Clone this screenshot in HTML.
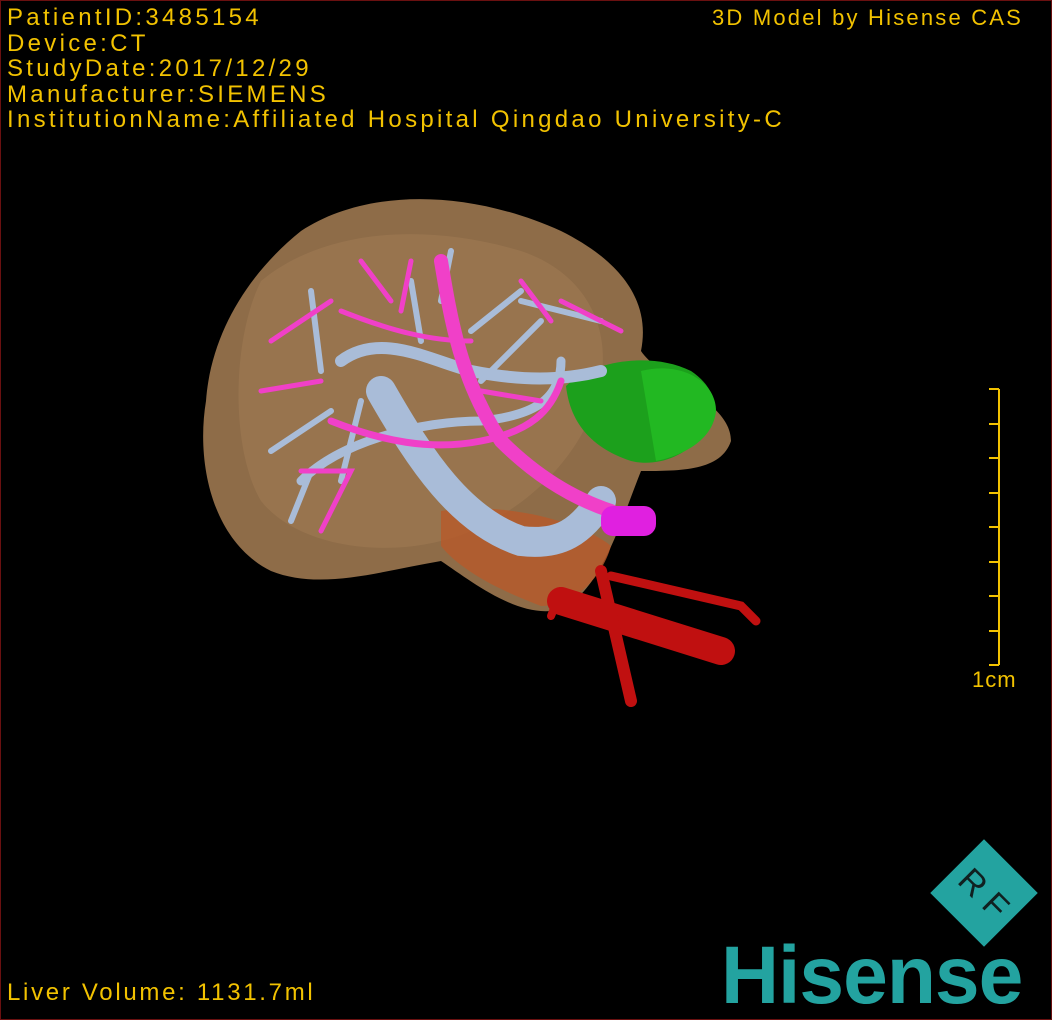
<!DOCTYPE html>
<html><head><style>
html,body{margin:0;padding:0;background:#000;}
.w{position:relative;width:1050px;height:1018px;border:1px solid #6a1010;overflow:hidden;background:#000;}
.t{position:absolute;color:#f2c200;font-family:"Liberation Sans",sans-serif;font-size:24px;letter-spacing:3.3px;white-space:nowrap;line-height:25.5px;}
</style></head><body><div class="w">
<svg width="1050" height="1018" style="position:absolute;left:0;top:0">
<path d="M300 230 C360 190 460 185 560 230 C620 260 650 300 640 350 C660 380 730 400 730 440 C720 470 680 470 640 470 C620 520 600 590 560 608 C520 620 470 580 440 560 C380 570 320 590 270 570 C210 540 195 460 205 400 C210 330 250 270 300 230 Z" fill="#8e6c48"/>
<path d="M260 280 C320 230 420 220 520 250 C580 270 610 320 600 380 C590 440 540 500 470 530 C400 560 300 550 260 500 C230 450 230 340 260 280Z" fill="#9e7a54" opacity="0.6"/>
<path d="M440 510 C500 500 580 520 610 545 C600 580 570 605 540 605 C500 590 460 570 440 545Z" fill="#b85a2a" opacity="0.8"/>
<g stroke="#c01010" fill="none" stroke-linecap="round">
<path d="M560 600 L720 650" stroke-width="28"/>
<path d="M600 570 L630 700" stroke-width="12"/>
<path d="M610 575 L740 605 L755 620" stroke-width="9"/>
<path d="M560 590 L550 615" stroke-width="8"/>
</g>
<path d="M565 385 C590 360 650 350 690 370 C720 390 720 420 700 435 C680 460 650 465 630 460 C600 450 570 430 565 385Z" fill="#1ca01c"/>
<path d="M640 370 C680 360 715 380 715 410 C712 440 680 455 655 460Z" fill="#22b822"/>
<g stroke="#a9bcd8" fill="none" stroke-linecap="round">
<path d="M380 390 C420 460 460 520 520 540 C560 545 580 530 600 500" stroke-width="30"/>
<path d="M300 480 C340 440 420 420 480 420 C530 415 560 400 560 360" stroke-width="9"/>
<path d="M340 360 C380 330 430 360 470 370 C520 380 560 380 600 370" stroke-width="12"/>
<path d="M310 290 L320 370 M270 450 L330 410 M290 520 L310 470 M360 400 L340 480 M440 300 L450 250 M470 330 L520 290 M480 380 L540 320 M520 300 L600 320 M420 340 L410 280" stroke-width="6"/>
</g>
<g stroke="#f040c8" fill="none" stroke-linecap="round">
<path d="M440 260 C450 320 460 380 500 440 C540 480 580 500 610 510" stroke-width="14"/>
<path d="M330 420 C380 440 430 450 480 440 C530 430 550 410 560 380" stroke-width="7"/>
<path d="M340 310 C390 330 430 340 470 340 M270 340 L330 300 M300 470 L350 470 L320 530 M260 390 L320 380 M520 280 L550 320 M480 390 L540 400 M410 260 L400 310 M560 300 L620 330 M360 260 L390 300" stroke-width="5"/>
</g>
<rect x="600" y="505" width="55" height="30" rx="12" fill="#e020e0"/>
<g stroke="#f2c200" stroke-width="2" fill="none">
<path d="M998 388 L998 664"/>
<path d="M988 388 H998 M988 423 H998 M988 457 H998 M988 492 H998 M988 526 H998 M988 561 H998 M988 595 H998 M988 630 H998 M988 664 H998"/>
</g>
<g transform="translate(983,892) rotate(45)">
<rect x="-38" y="-38" width="76" height="76" fill="#23a3a0"/>
<text x="0" y="12" text-anchor="middle" font-family="Liberation Sans,sans-serif" font-size="34" fill="#102020">R F</text>
</g>
</svg>
<div class="t" style="left:6px;top:4px">PatientID:3485154<br>Device:CT<br>StudyDate:2017/12/29<br>Manufacturer:SIEMENS<br>InstitutionName:Affiliated Hospital Qingdao University-C</div>
<div class="t" style="left:711px;top:4px;font-size:22px;letter-spacing:2.2px">3D Model by Hisense CAS</div>
<div class="t" style="left:971px;top:666px;font-size:22px;letter-spacing:1px">1cm</div>
<div class="t" style="left:6px;top:979px;letter-spacing:2.7px">Liver Volume: 1131.7ml</div>
<div style="position:absolute;left:720px;top:935px;color:#23a3a0;font-family:'Liberation Sans',sans-serif;font-weight:bold;font-size:82px;line-height:80px;letter-spacing:-1px;transform:scaleX(0.98);transform-origin:left">Hisense</div>
</div></body></html>
